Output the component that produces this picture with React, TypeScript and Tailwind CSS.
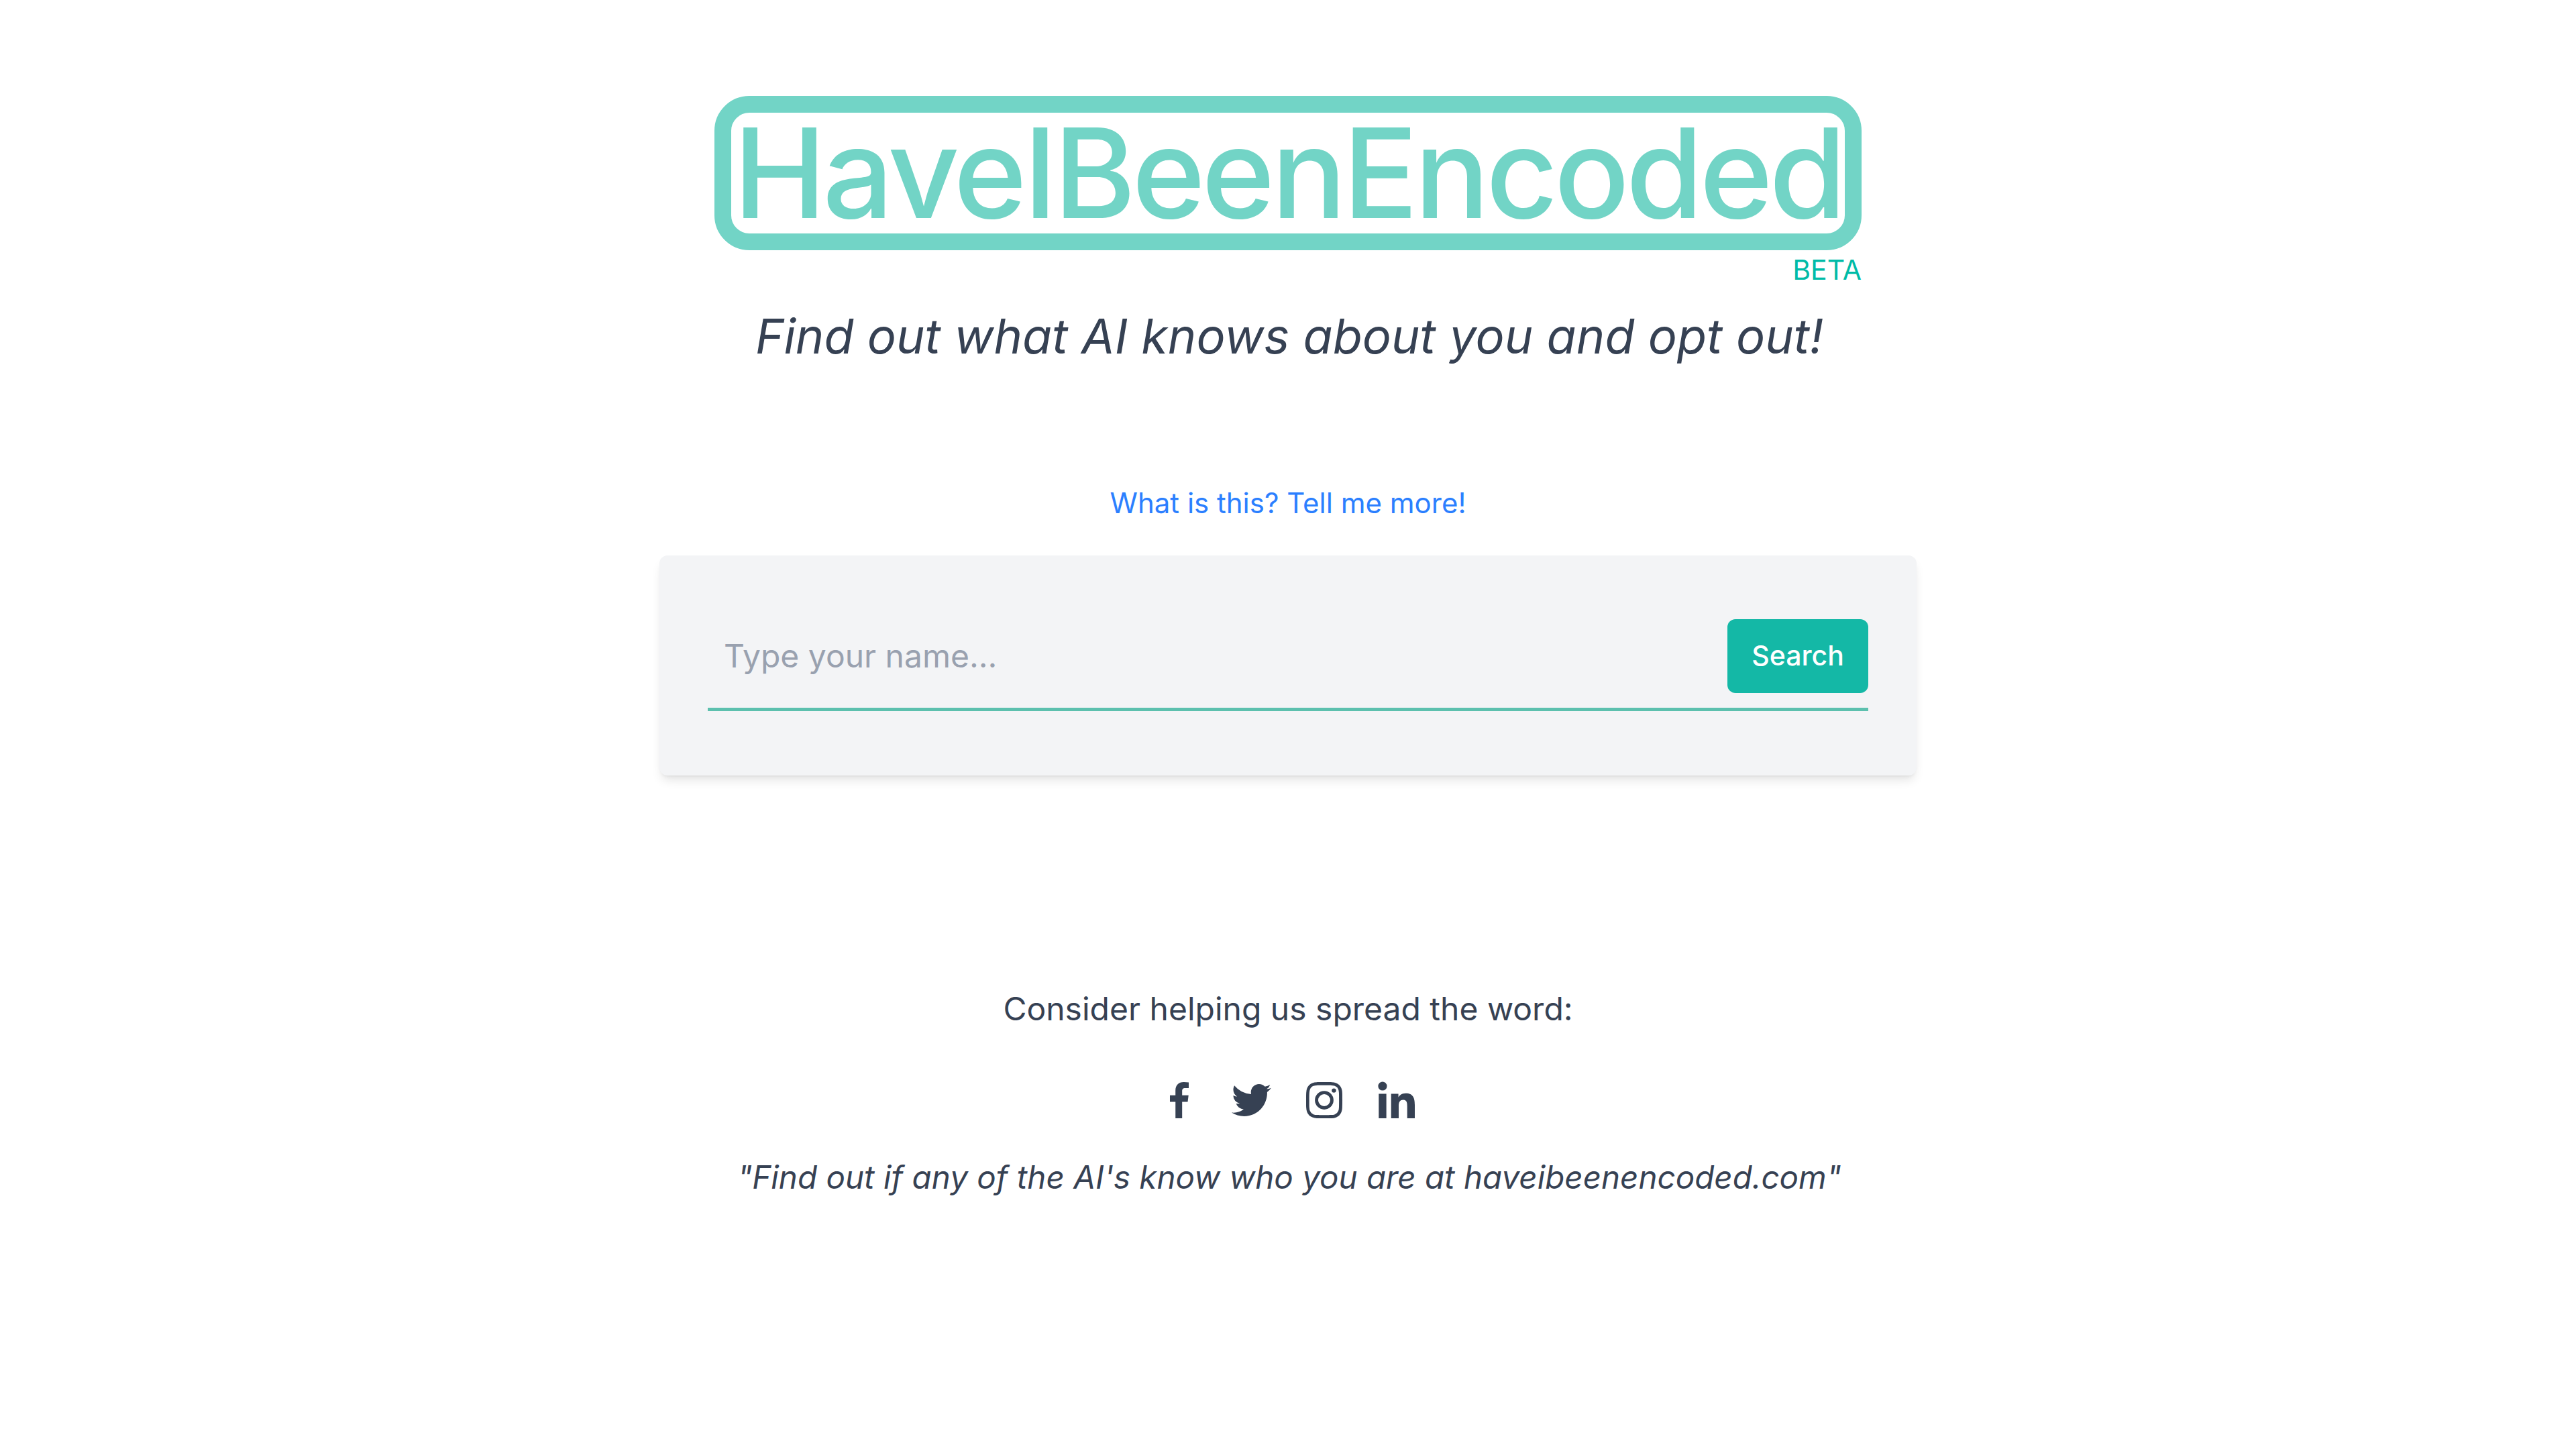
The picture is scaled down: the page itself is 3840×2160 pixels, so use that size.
import { BiLogoFacebook, BiLogoInstagram, BiLogoLinkedin, BiLogoTwitter } from "react-icons/bi"

const socials = [
  { id: "facebook", Icon: BiLogoFacebook },
  { id: "twitter", Icon: BiLogoTwitter },
  { id: "instagram", Icon: BiLogoInstagram },
  { id: "linkedin", Icon: BiLogoLinkedin },
]

export default function App() {
  return (
    <div className="min-h-screen bg-white flex flex-col items-center pt-[143px] font-['Inter',sans-serif]">
      <div className="w-[1710px] flex flex-col">
        <div className="h-[230px] border-[25px] border-[#72d4c6] rounded-[52px] flex items-center justify-center">
          <span className="text-[186px] leading-none font-medium tracking-[-0.029em] text-[#72d4c6] whitespace-nowrap">HaveIBeenEncoded</span>
        </div>
        <span className="self-end text-[41px] leading-[58px] text-teal-500">BETA</span>
      </div>

      <h2 className="mt-[20px] ml-[4px] text-[72px] leading-[100px] italic text-gray-700 whitespace-nowrap">
        Find out what AI knows about you and opt out!
      </h2>

      <a className="mt-[167px] text-[42px] leading-[64px] text-blue-500 whitespace-nowrap">What is this? Tell me more!</a>

      <div className="mt-[46px] w-[1874px] h-[328px] bg-gray-100 rounded-xl shadow-lg px-[72px] pt-[95px]">
        <div className="flex items-center border-b-[5px] border-[#5cc0ae] pb-[22px]">
          <input
            className="flex-1 bg-transparent pl-[24px] pr-[26px] text-[48px] text-gray-700 outline-none placeholder:text-gray-400"
            placeholder="Type your name..."
            readOnly
          />
          <button className="w-[210px] h-[110px] rounded-xl bg-[#14b8a6] text-white font-medium text-[41px]">Search</button>
        </div>
      </div>

      <p className="mt-[314px] text-[48px] leading-[68px] text-gray-700 whitespace-nowrap">Consider helping us spread the word:</p>

      <div className="mt-[66px] flex gap-[36px] text-gray-700">
        {socials.map(({ id, Icon }) => (
          <Icon key={id} className="w-[72px] h-[72px]" />
        ))}
      </div>

      <p className="mt-[43px] ml-[4px] text-[47.5px] leading-[72px] italic text-gray-700 whitespace-nowrap">
        "Find out if any of the AI's know who you are at haveibeenencoded.com"
      </p>
    </div>
  )
}
